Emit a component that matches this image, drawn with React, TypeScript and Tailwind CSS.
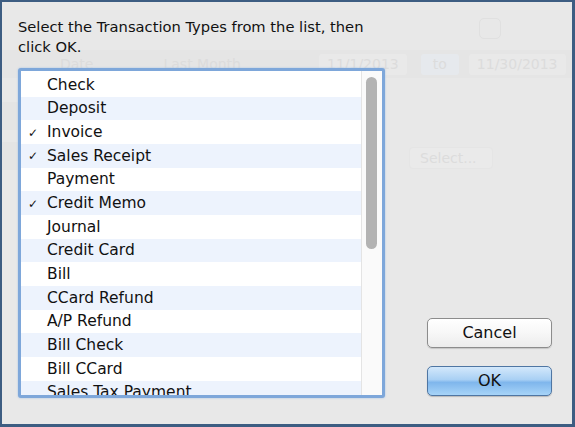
import React from "react";

const types = [
  { name: "Check", checked: false },
  { name: "Deposit", checked: false },
  { name: "Invoice", checked: true },
  { name: "Sales Receipt", checked: true },
  { name: "Payment", checked: false },
  { name: "Credit Memo", checked: true },
  { name: "Journal", checked: false },
  { name: "Credit Card", checked: false },
  { name: "Bill", checked: false },
  { name: "CCard Refund", checked: false },
  { name: "A/P Refund", checked: false },
  { name: "Bill Check", checked: false },
  { name: "Bill CCard", checked: false },
  { name: "Sales Tax Payment", checked: false },
];

function Ghost() {
  // faint window showing through the sheet
  return (
    <div className="pointer-events-none absolute inset-0 whitespace-nowrap text-[14px] text-[#dcdcdc]">
      <div className="absolute left-[477px] top-[16px] h-[21px] w-[22px] rounded-[5px] border border-[#e0e0e0]" />
      <div className="absolute left-0 right-0 top-[48px] flex h-[28px] items-center bg-[#e5e5e5]">
        <span className="ml-[58px]">Date</span>
        <span className="ml-[62px] px-2">Last Month</span>
        <span className="ml-[70px] rounded-[3px] bg-[#e9e9e9] px-2">11/1/2013</span>
        <span className="ml-[14px] rounded-[3px] bg-[#e6e9ed] px-3">to</span>
        <span className="ml-[10px] rounded-[3px] bg-[#e9e9e9] px-2">11/30/2013</span>
      </div>
      <div className="absolute left-0 top-[100px] h-[28px] w-[20px] bg-[#e4e4e4]" />
      <div className="absolute left-0 top-[140px] h-[28px] w-[20px] bg-[#e4e4e4]" />
      <div className="absolute left-[407px] top-[145px] flex h-[22px] w-[84px] items-center rounded-[4px] border border-[#e5e5e5] bg-[#eaeaea] pl-[10px]">
        Select...
      </div>
    </div>
  );
}

export default function App() {
  return (
    <div
      className="relative h-[427px] w-[575px] overflow-hidden border-l-2 border-t-2 border-r-[3px] border-b-[3px] border-[#3d5d82] bg-[#e8e8e8] text-[#111]"
      style={{ fontFamily: '"DejaVu Sans", "Noto Sans", sans-serif' }}
    >
      <Ghost />
      <div className="relative flex flex-col pl-[16px] pt-[15px]">
        <p className="text-[14.7px] leading-[20px]">
          Select the Transaction Types from the list, then
          <br />
          click OK.
        </p>

        <div className="mt-[11px] flex items-end">
          {/* list box */}
          <div className="flex h-[330px] w-[367px] overflow-hidden rounded-[3px] border-[3px] border-[#7ea7da] bg-white shadow-[0_0_2px_#9dbde3]">
            <div className="flex-1 overflow-hidden pt-[2px]">
              {types.map((t, i) => (
                <div
                  key={t.name}
                  className={`flex h-[23.67px] items-center pt-[1px] text-[15.5px] ${
                    i % 2 === 1 ? "bg-[#edf3fd]" : "bg-white"
                  }`}
                >
                  <span className="w-[26px] pl-[7px] text-[12px] leading-none">
                    {t.checked ? "✓" : ""}
                  </span>
                  <span>{t.name}</span>
                </div>
              ))}
            </div>
            <div className="w-[21px] shrink-0 border-l border-[#e4e4e4] bg-[#fafafa] pl-[4px] pt-[6px]">
              <div className="h-[172px] w-[11px] rounded-full bg-[#b3b3b3]" />
            </div>
          </div>

          {/* buttons */}
          <div className="mb-[2px] ml-[42px] flex flex-col gap-[18px]">
            <button
              type="button"
              className="h-[30px] w-[125px] rounded-[5px] border border-[#8c8c8c] bg-gradient-to-b from-white via-[#f7f7f7] to-[#ececec] text-[16px] shadow-[0_1px_1px_rgba(0,0,0,0.15)]"
            >
              Cancel
            </button>
            <button
              type="button"
              className="h-[30px] w-[125px] rounded-[5px] border border-[#4f76a3] bg-[linear-gradient(to_bottom,#d3e8fb_0%,#a9d0f4_45%,#7fb6ec_55%,#a7d4f8_100%)] text-[16px] shadow-[0_1px_1px_rgba(0,0,0,0.2)]"
            >
              OK
            </button>
          </div>
        </div>
      </div>
    </div>
  );
}
